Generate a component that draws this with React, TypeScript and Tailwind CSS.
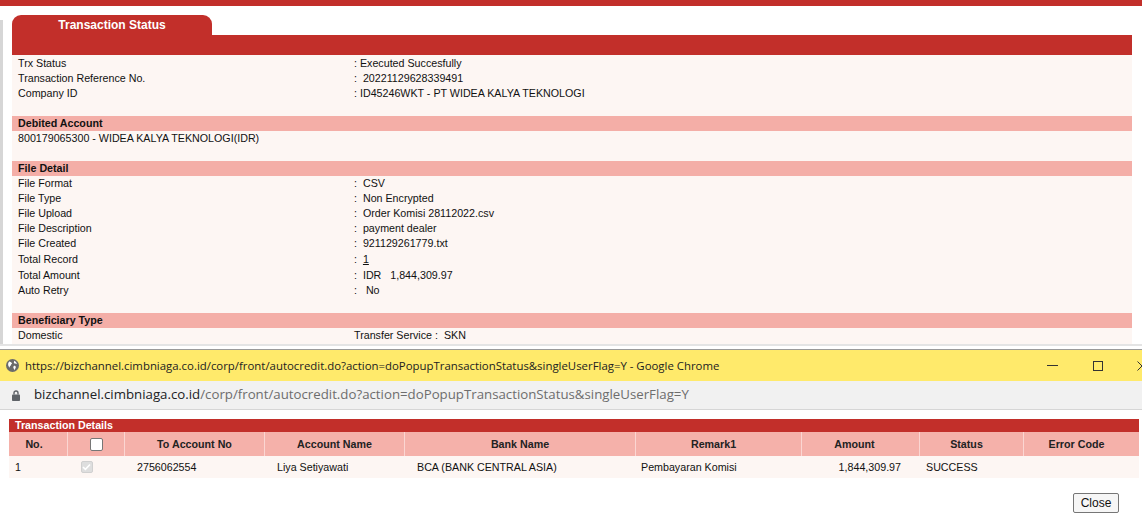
import React from "react";

const red = "bg-[#c22f2a]";

function InfoRow({ label, value, h = "h-[15px]" }: { label: string; value: React.ReactNode; h?: string }) {
  return (
    <div className={`flex items-center ${h} pl-[6px]`}>
      <div className="w-[336px] shrink-0">{label}</div>
      <div className="whitespace-pre">{value}</div>
    </div>
  );
}

function SectionHeader({ title }: { title: string }) {
  return (
    <div className="flex h-[15px] items-center bg-[#f4aea7] pl-[6px] font-bold">{title}</div>
  );
}

function Blank() {
  return <div className="h-[15px]" />;
}

function GlobeIcon() {
  return (
    <svg width="13" height="13" viewBox="0 0 16 16">
      <circle cx="8" cy="8" r="8" fill="#6b6b6b" />
      <path
        d="M4.2 3.2c1.2.2 1.6 1.1 2.6 1.3.9.2.7 1.3 0 1.7-.9.5-.3 1.6-1.2 2.1-.8.4-1.2 1.4-1 2.4-1.1-.9-2-2.4-2-4.2 0-1.3.6-2.5 1.6-3.3zM9.8 8.5c.9-.2 2 .3 2.2 1.2.2.9-.4 1.6-.8 2.3-.4.7-.5 1.4-1 1.7-.4-.6-.2-1.5-.7-2.1-.5-.7-.9-2.9.3-3.1zM10 2.3c1.6.6 2.9 2 3.4 3.7-.9-.1-1.5-.7-2.300-.6-.9.1-1.6-.6-1.4-1.5.1-.6.5-1 .3-1.6z"
        fill="#ffffff"
      />
    </svg>
  );
}

function LockIcon() {
  return (
    <svg width="8" height="11" viewBox="0 0 8 11">
      <path d="M2 4.5V3a2 2 0 0 1 4 0v1.5" stroke="#5f6368" strokeWidth="1.4" fill="none" />
      <rect x="0" y="4.5" width="8" height="6.5" rx="0.8" fill="#5f6368" />
    </svg>
  );
}

const cols = "grid grid-cols-[59px_57px_140px_140px_231px_166px_118px_104px_115px]";
const th = "flex items-center justify-center border-r border-[#fbd6d2]";

export default function App() {
  return (
    <div className="h-[523px] w-[1142px] overflow-hidden bg-white font-['Liberation_Sans',Arial,sans-serif] text-[10.7px] text-[#111]">
      {/* halaman utama */}
      <div className={`h-[6px] ${red}`} />
      <div className="flex h-[338px]">
        <div className="mt-[14px] w-[3px] bg-[#d6d6d6]" />
        <div className="ml-[9px] w-[1120px] pt-[9px]">
          <div className={`flex h-[20px] w-[200px] items-center justify-center rounded-t-[9px] ${red} text-[12px] font-bold text-white`}>
            Transaction Status
          </div>
          <div className={`h-[20px] ${red}`} />
          <div className="bg-[#fdf6f3] pt-[1px] pb-[1px]">
            <InfoRow label="Trx Status" value=": Executed Succesfully" />
            <InfoRow label="Transaction Reference No." value=":  20221129628339491" />
            <InfoRow label="Company ID" value=": ID45246WKT - PT WIDEA KALYA TEKNOLOGI" />
            <Blank />
            <SectionHeader title="Debited Account" />
            <div className="flex h-[15px] items-center pl-[6px]">800179065300 - WIDEA KALYA TEKNOLOGI(IDR)</div>
            <Blank />
            <SectionHeader title="File Detail" />
            <InfoRow label="File Format" value=":  CSV" />
            <InfoRow label="File Type" value=":  Non Encrypted" />
            <InfoRow label="File Upload" value=":  Order Komisi 28112022.csv" />
            <InfoRow label="File Description" value=":  payment dealer" />
            <InfoRow label="File Created" value=":  921129261779.txt" />
            <InfoRow
              label="Total Record"
              h="h-[16px]"
              value={
                <>
                  {":  "}
                  <span className="underline">1</span>
                </>
              }
            />
            <InfoRow label="Total Amount" h="h-[16px]" value=":  IDR   1,844,309.97" />
            <InfoRow label="Auto Retry" value=":   No" />
            <Blank />
            <SectionHeader title="Beneficiary Type" />
            <InfoRow label="Domestic" value="Transfer Service :  SKN" />
          </div>
        </div>
      </div>
      <div className="h-[2px] bg-[#e4e4e4]" />
      <div className="h-[3px]" />

      {/* jendela popup chrome */}
      <div className="border-t border-[#9a9a9a]">
        <div className="flex h-[31px] items-center bg-[#ffea6b] font-['Open_Sans',sans-serif] text-[11.4px] text-[#222]">
          <div className="ml-[6px] mr-[6px] flex items-center">
            <GlobeIcon />
          </div>
          <div className="whitespace-nowrap">
            https://bizchannel.cimbniaga.co.id/corp/front/autocredit.do?action=doPopupTransactionStatus&amp;singleUserFlag=Y - Google Chrome
          </div>
          <div className="flex-1" />
          <div className="flex items-center">
            <div className="h-px w-[11px] bg-[#333]" />
            <div className="ml-[35px] h-[10px] w-[10px] border border-[#333]" />
            <div className="ml-[34px] w-[5px] overflow-hidden">
              <svg width="10" height="10" viewBox="0 0 10 10">
                <path d="M0.5 0.5l9 9M9.5 0.5l-9 9" stroke="#333" strokeWidth="1" />
              </svg>
            </div>
          </div>
        </div>
        <div className="flex h-[29px] items-center border-b border-[#d6d6d6] bg-[#f1f1f1] font-['Open_Sans',sans-serif] text-[13.25px]">
          <div className="ml-[12px] mr-[14px] flex items-center">
            <LockIcon />
          </div>
          <div className="whitespace-nowrap text-[#6d6d6d]">
            <span className="text-[#202124]">bizchannel.cimbniaga.co.id</span>
            /corp/front/autocredit.do?action=doPopupTransactionStatus&amp;singleUserFlag=Y
          </div>
        </div>
      </div>

      <div className="pl-[9px] pr-[3px] pt-[9px]">
        <div className={`flex h-[13px] items-center ${red} pl-[6px] font-bold text-white`}>Transaction Details</div>
        <div className={`${cols} h-[24px] bg-[#f5b1aa] font-bold text-[#222]`}>
          <div className={`${th} pr-[8px]`}>No.</div>
          <div className={th}>
            <span className="h-[13px] w-[13px] rounded-[2px] border border-[#767676] bg-white" />
          </div>
          <div className={th}>To Account No</div>
          <div className={th}>Account Name</div>
          <div className={th}>Bank Name</div>
          <div className={`${th} pr-[10px]`}>Remark1</div>
          <div className={`${th} pr-[12px]`}>Amount</div>
          <div className={`${th} pr-[10px]`}>Status</div>
          <div className="flex items-center justify-center pr-[10px]">Error Code</div>
        </div>
        <div className={`${cols} h-[22px] items-center bg-[#fdf6f3]`}>
          <div className="pl-[6px]">1</div>
          <div className="flex justify-center pr-[20px]">
            <span className="flex h-[12px] w-[12px] items-center justify-center rounded-[2px] border border-[#d0d0d0] bg-[#dedede]">
              <svg width="9" height="8" viewBox="0 0 9 8">
                <path d="M1 4l2.4 2.4L8 1.5" stroke="#fff" strokeWidth="1.6" fill="none" />
              </svg>
            </span>
          </div>
          <div className="pl-[12px]">2756062554</div>
          <div className="pl-[12px]">Liya Setiyawati</div>
          <div className="pl-[12px]">BCA (BANK CENTRAL ASIA)</div>
          <div className="pl-[5px]">Pembayaran Komisi</div>
          <div className="pr-[19px] text-right">1,844,309.97</div>
          <div className="pl-[6px]">SUCCESS</div>
          <div />
        </div>
        <div className="mt-[15px] flex justify-end pr-[20px]">
          <button className="h-[20px] w-[46px] rounded-[2px] border border-[#767676] bg-[#f6f6f6] text-[12px] text-[#111]">
            Close
          </button>
        </div>
      </div>
    </div>
  );
}
